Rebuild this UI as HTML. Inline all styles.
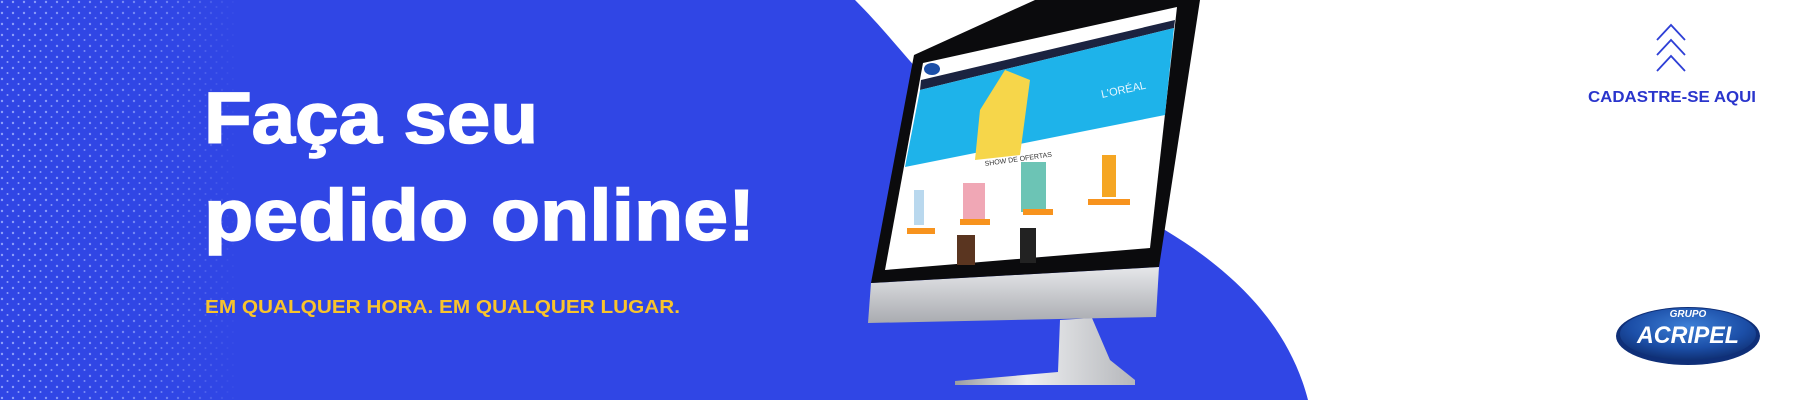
<!DOCTYPE html>
<html><head><meta charset="utf-8"><style>
html,body{margin:0;padding:0;width:1800px;height:400px;overflow:hidden;background:#fff}
svg{display:block}
</style></head><body>
<svg width="1800" height="400" viewBox="0 0 1800 400" xmlns="http://www.w3.org/2000/svg">
<defs>
<pattern id="dots" width="11" height="11" patternUnits="userSpaceOnUse">
<circle cx="2" cy="2" r="1.2" fill="#9fb0ff"/>
<circle cx="7.5" cy="7" r="1" fill="#9fb0ff"/>
</pattern>
<linearGradient id="fade" x1="0" x2="1" y1="0" y2="0">
<stop offset="0" stop-color="#fff" stop-opacity="0.85"/>
<stop offset="0.7" stop-color="#fff" stop-opacity="0.55"/>
<stop offset="1" stop-color="#fff" stop-opacity="0"/>
</linearGradient>
<mask id="m"><rect x="0" y="0" width="240" height="400" fill="url(#fade)"/></mask>
<linearGradient id="silver" x1="0" x2="0" y1="0" y2="1">
<stop offset="0" stop-color="#e6e7ea"/><stop offset="1" stop-color="#a9abb0"/>
</linearGradient>
<linearGradient id="neck" x1="0" x2="1" y1="0" y2="0">
<stop offset="0" stop-color="#9a9ca0"/><stop offset="0.4" stop-color="#eeeff1"/><stop offset="1" stop-color="#b5b7bb"/>
</linearGradient>
<radialGradient id="logo" cx="0.5" cy="0.35" r="0.7">
<stop offset="0" stop-color="#3d7fd6"/><stop offset="0.6" stop-color="#1c4fa8"/><stop offset="1" stop-color="#0d2a6a"/>
</radialGradient>
</defs>
<path d="M0 0 L855 0 C 880 25 900 50 918 70 L1165 230 C 1240 275 1290 330 1308 400 L0 400 Z" fill="#3046e5"/>
<rect x="0" y="0" width="240" height="400" fill="url(#dots)" mask="url(#m)"/>
<text x="204" y="143" font-family="Liberation Sans, sans-serif" font-weight="bold" font-size="72" fill="#fff" stroke="#fff" stroke-width="1.5" textLength="334" lengthAdjust="spacingAndGlyphs">Faça seu</text>
<text x="204" y="240" font-family="Liberation Sans, sans-serif" font-weight="bold" font-size="72" fill="#fff" stroke="#fff" stroke-width="1.5" textLength="551" lengthAdjust="spacingAndGlyphs">pedido online!</text>
<text x="205" y="313" font-family="Liberation Sans, sans-serif" font-weight="bold" font-size="18" fill="#f9c42b" textLength="475" lengthAdjust="spacingAndGlyphs">EM QUALQUER HORA. EM QUALQUER LUGAR.</text>
<!-- monitor -->
<polygon points="1060,320 1092,318 1110,360 1135,380 1135,385 955,385 955,381 1058,372" fill="url(#neck)"/>
<polygon points="871,283 1159,267 1156,317 868,323" fill="url(#silver)"/>
<polygon points="914,55 1035,0 1200,0 1159,267 871,283" fill="#0b0b0d"/>
<polygon points="923,63 1177,7 1150,248 885,270" fill="#fff"/>
<polygon points="921,80 1175,20 1174,28 920,90" fill="#1b2340"/>
<polygon points="920,90 1174,28 1165,115 905,167" fill="#1eb3ea"/>
<polygon points="980,110 1005,70 1030,80 1020,155 975,160" fill="#f6d64a"/>
<rect x="1000" y="75" width="30" height="70" fill="#f3f3ea" transform="skewY(-12)"/>
<ellipse cx="932" cy="69" rx="8" ry="6" fill="#1c4fa8"/>
<text x="1102" y="98" font-family="Liberation Sans, sans-serif" font-size="11" fill="#e8f6ff" transform="rotate(-12 1102 98)">L'ORÉAL</text>
<text x="985" y="166" font-family="Liberation Sans, sans-serif" font-size="7" fill="#333" transform="rotate(-8 985 166)">SHOW DE OFERTAS</text>
<rect x="914" y="190" width="10" height="35" fill="#b9d8ee"/>
<rect x="963" y="183" width="22" height="40" fill="#f0a7b5"/>
<rect x="1021" y="162" width="25" height="50" fill="#6cc4b5"/>
<rect x="1102" y="155" width="14" height="42" fill="#f5a623"/>
<rect x="907" y="228" width="28" height="6" fill="#f7931e"/>
<rect x="960" y="219" width="30" height="6" fill="#f7931e"/>
<rect x="1023" y="209" width="30" height="6" fill="#f7931e"/>
<rect x="1088" y="199" width="42" height="6" fill="#f7931e"/>
<rect x="957" y="235" width="18" height="30" fill="#5a3520"/>
<rect x="1020" y="228" width="16" height="35" fill="#222"/>
<!-- chevrons -->
<g fill="none" stroke="#2e3fd6" stroke-width="1.8">
<polyline points="1657,40 1671,25 1685,40"/>
<polyline points="1657,55 1671,40 1685,55"/>
<polyline points="1657,71 1671,56 1685,71"/>
</g>
<text x="1588" y="102" font-family="Liberation Sans, sans-serif" font-weight="bold" font-size="16" fill="#2a35cc" textLength="168" lengthAdjust="spacingAndGlyphs">CADASTRE-SE AQUI</text>
<ellipse cx="1688" cy="336" rx="72" ry="29" fill="#0f2f78"/>
<ellipse cx="1688" cy="334" rx="68" ry="26" fill="url(#logo)"/>
<text x="1688" y="317" text-anchor="middle" font-family="Liberation Sans, sans-serif" font-weight="bold" font-style="italic" font-size="10" fill="#fff">GRUPO</text>
<text x="1688" y="343" text-anchor="middle" font-family="Liberation Sans, sans-serif" font-weight="bold" font-style="italic" font-size="24" fill="#fff" textLength="102" lengthAdjust="spacingAndGlyphs">ACRIPEL</text>
</svg>
</body></html>
